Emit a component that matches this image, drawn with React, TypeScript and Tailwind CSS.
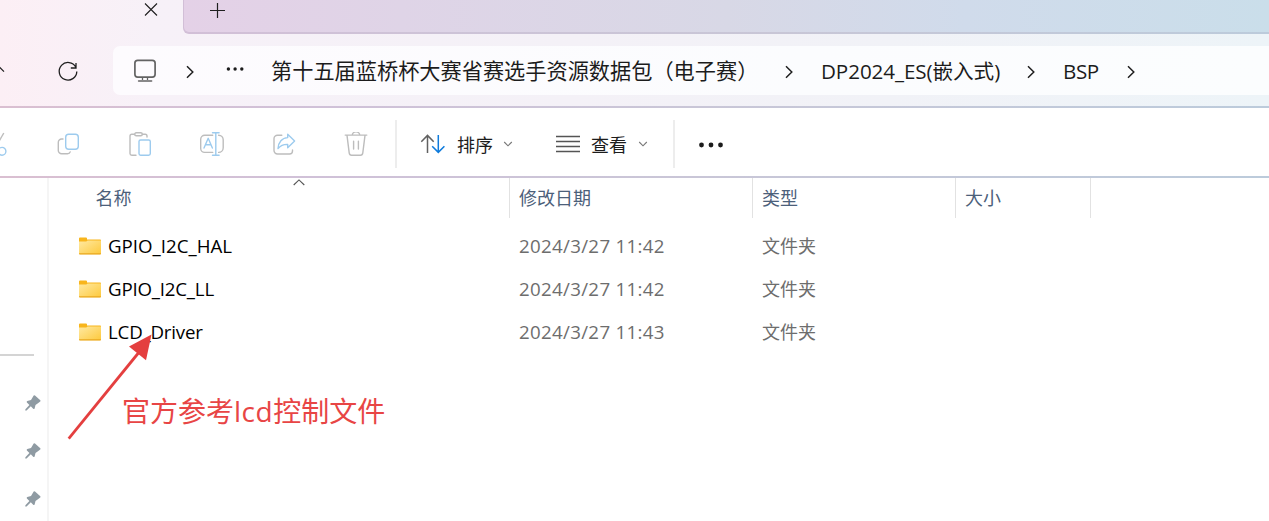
import { ReactNode } from "react";
import { clsx } from "clsx";

const GRAY = "#bdbdbd";
const BLUE = "#9dcbee";

const FILES = [
  { name: "GPIO_I2C_HAL", modified: "2024/3/27 11:42", tracking: "tracking-[0px]" },
  { name: "GPIO_I2C_LL", modified: "2024/3/27 11:42", tracking: "tracking-[-0.2px]" },
  { name: "LCD_Driver", modified: "2024/3/27 11:43", tracking: "tracking-[-0.2px]" },
];

function Icon({ size = 24, className, children }: { size?: number; className?: string; children: ReactNode }) {
  return (
    <svg
      width={size}
      height={size}
      viewBox={`0 0 ${size} ${size}`}
      fill="none"
      strokeWidth={1.4}
      strokeLinecap="round"
      strokeLinejoin="round"
      className={clsx("shrink-0", className)}
      aria-hidden="true"
    >
      {children}
    </svg>
  );
}

function Crumb({ className }: { className?: string }) {
  return (
    <svg width="8" height="14" viewBox="0 0 8 14" fill="none" className={clsx("shrink-0", className)}>
      <path d="M1 1.2l5.8 5.8L1 12.8" stroke="#1f1f1f" strokeWidth="1.5" />
    </svg>
  );
}

function ChevronDown({ className }: { className?: string }) {
  return (
    <svg width="10" height="6" viewBox="0 0 10 6" fill="none" className={clsx("shrink-0", className)}>
      <path d="M1.2 1L5 4.8 8.8 1" stroke="#777" strokeWidth="1.1" />
    </svg>
  );
}

function TabStrip() {
  return (
    <div className="flex h-[34px]">
      <div className="flex w-[183px] shrink-0 pl-[143px]">
        <svg width="16" height="20" viewBox="0 0 16 20" fill="none">
          <path d="M2 3.5l12 12M14 3.5l-12 12" stroke="#1f1f1f" strokeWidth="1.1" />
        </svg>
      </div>
      <div className="flex-1 rounded-bl-[6px] bg-[linear-gradient(90deg,#d2bfd7,#cdc3d7_25%,#c8c6d6_55%,#bccbdb)] pb-[2px] pl-[1px]">
        <div className="h-full rounded-bl-[5px] bg-[linear-gradient(90deg,#e4d1e7,#dfd4e7_20%,#d8d8e6_50%,#d0dbeb_72%,#cadeea)] pl-[25px]">
          <svg width="16" height="20" viewBox="0 0 16 20" fill="none">
            <path d="M1 10.5h15M8.5 3v15" stroke="#1f1f1f" strokeWidth="1.2" />
          </svg>
        </div>
      </div>
    </div>
  );
}

function AddressBar() {
  return (
    <div className="flex h-[72px] items-start pt-[12px]">
      <div className="flex h-[49px] w-[113px] shrink-0 items-center">
        <svg width="8" height="24" viewBox="0 0 8 24" fill="none">
          <path d="M-4 11l3-3.3 5 5" stroke="#1f1f1f" strokeWidth="1.2" />
        </svg>
        <svg width="24" height="24" viewBox="0 0 24 24" fill="none" className="ml-[48px]">
          <path d="M19.8 8.2A8.8 8.8 0 1 0 20.8 12.5M20 4v5h-5.2" stroke="#1f1f1f" strokeWidth="1.3" />
        </svg>
      </div>
      <div className="flex h-[49px] flex-1 items-center rounded-l-[7px] bg-[linear-gradient(90deg,#fdfbfe,#fbfcfe_60%,#fbfdfe)] text-[21.2px] leading-[49px] text-[#1c1c1c]">
        <svg width="24" height="24" viewBox="0 0 24 24" fill="none" className="ml-[20px] shrink-0" stroke="#636363">
          <rect x="1.9" y="1.3" width="20.2" height="16.8" rx="2.8" strokeWidth="1.7" />
          <path d="M9.5 18v3M14.5 18v3" strokeWidth="1.3" />
          <path d="M5.6 22h13" strokeWidth="1.6" strokeLinecap="round" />
        </svg>
        <Crumb className="mt-[3px] ml-[29px]" />
        <svg width="20" height="6" viewBox="0 0 20 6" fill="#1c1c1c" className="mb-[3px] ml-[31px] shrink-0">
          <circle cx="3.4" cy="3" r="1.7" />
          <circle cx="10.1" cy="3" r="1.7" />
          <circle cx="16.8" cy="3" r="1.7" />
        </svg>
        <span className="ml-[26px] w-[514px] shrink-0 whitespace-nowrap">
          第十五届蓝桥杯大赛省赛选手资源数据包（电子赛）
        </span>
        <Crumb className="mt-[3px]" />
        <span className="ml-[28px] w-[206px] shrink-0 whitespace-nowrap pt-px text-[20.6px] tracking-[-0.07px]">
          DP2024_ES(嵌入式)
        </span>
        <Crumb className="mt-[3px]" />
        <span className="ml-[28px] w-[64px] shrink-0 whitespace-nowrap pt-px text-[20.6px] tracking-[-0.4px]">BSP</span>
        <Crumb className="mt-[3px]" />
      </div>
    </div>
  );
}

function Toolbar() {
  return (
    <div className="flex h-[68px] items-center bg-white pt-[3px] text-[18px] text-[#1c1c1c]">
      <svg width="8" height="24" viewBox="0 0 8 24" fill="none" strokeWidth="1.4" className="shrink-0">
        <path d="M3.8 1L-2 11" stroke={GRAY} />
        <circle cx="2" cy="19.3" r="3.9" stroke={BLUE} />
      </svg>
      <div className="ml-[48px] flex shrink-0 gap-[48px]">
        <Icon>
          <path d="M7 7H5.6a3.3 3.3 0 0 0-3.3 3.3v8.2a3.3 3.3 0 0 0 3.3 3.3h6q2 0 2.6-1.9" stroke={GRAY} />
          <rect x="9.7" y="2.2" width="12.6" height="15" rx="3" stroke={BLUE} />
        </Icon>
        <Icon>
          <path d="M6.5 2.2H3.8Q2 2.2 2 4v17.5Q2 23.2 3.8 23.2H8M14.5 2.2h2.7Q19 2.2 19 4v1" stroke={GRAY} />
          <rect x="6.7" y="0.7" width="7.6" height="3" rx="1.5" stroke={GRAY} />
          <rect x="11" y="8" width="11.3" height="15.2" rx="1.6" stroke={BLUE} />
        </Icon>
        <Icon>
          <path d="M12.7 3.2H4.7a4 4 0 0 0-4 4v9.2a4 4 0 0 0 4 4h8M18.6 3.2a4.6 4.6 0 0 1 4.6 4.6v8a4.6 4.6 0 0 1-4.6 4.6" stroke={GRAY} />
          <path d="M15.8.7v22.6M12.5.7h6.6M12.5 23.3h6.6M4 16L8.2 6.3 12.4 16M5.5 12.7h5.4" stroke={BLUE} />
        </Icon>
        <Icon>
          <path d="M9.8 3.3H5.5A3.5 3.5 0 0 0 2 6.8v11.7A3.5 3.5 0 0 0 5.5 22h12q3 0 3-3v-1" stroke={GRAY} />
          <path d="M15.7 2.2L22.6 9l-6.9 6.8v-3.4C11.2 12.2 8.2 14 6 16.6 6.3 10 10.2 5.8 15.7 5.6z" stroke={BLUE} />
        </Icon>
        <Icon>
          <path d="M1.2 3.1h21.6M8.3 3A3.7 3.2 0 0 1 15.7 3M3 3.3l2.2 17.6q.3 2.4 2.3 2.4h9q2 0 2.3-2.4L21 3.3M9.6 9.3v7.8M14.4 9.3v7.8" stroke={GRAY} />
        </Icon>
      </div>
      <div className="ml-[27px] h-[48px] w-[2px] shrink-0 bg-[#ededed]" />
      <svg width="26" height="22" viewBox="0 0 26 22" fill="none" strokeWidth="1.5" className="mt-px ml-[23px] shrink-0">
        <path d="M7.5 20V2.5M1.3 8.7l6.2-6.3 6.2 6.3" stroke="#616161" />
        <path d="M18.3 2v17.4M12.2 13.2l6.1 6.2 6.1-6.2" stroke="#0f7bdc" />
      </svg>
      <span className="ml-[11px] w-[46px] shrink-0 pt-[3px]">排序</span>
      <ChevronDown />
      <svg width="24" height="18" viewBox="0 0 24 18" fill="none" className="mt-px ml-[43px] shrink-0">
        <path d="M0 1.5h24M0 6.5h24M0 11.5h24M0 16.5h24" stroke="#555" strokeWidth="1.3" />
      </svg>
      <span className="ml-[11px] w-[47px] shrink-0 pt-[3px]">查看</span>
      <ChevronDown />
      <div className="ml-[25px] h-[48px] w-[2px] shrink-0 bg-[#ededed]" />
      <svg width="26" height="6" viewBox="0 0 26 6" fill="#1c1c1c" className="mt-[2px] ml-[23px] shrink-0">
        <circle cx="3.5" cy="3" r="2.4" />
        <circle cx="13" cy="3" r="2.4" />
        <circle cx="22.5" cy="3" r="2.4" />
      </svg>
    </div>
  );
}

function Pin() {
  return (
    <svg width="16" height="16" viewBox="0 0 16 16" className="shrink-0">
      <path
        d="M8.7.5Q9.4 0 10 .6L15.3 5.2Q15.9 5.9 15.2 6.5L13.3 8 10.5 10 9.7 13.2Q9 14.6 8.2 13.7L5.8 11.2 1.6 15.4.2 15.6.4 14.3 4.4 9.9 1.9 7.6Q1.2 6.6 2.3 6.1L6 5.1z"
        fill="#8f9ba3"
      />
    </svg>
  );
}

function Sidebar() {
  return (
    <div className="w-[49px] shrink-0 border-r-2 border-[#f5f5f5]">
      <div className="mt-[176px] h-[2px] w-[34px] bg-[#d4d4d4]" />
      <div className="mt-[39px] ml-[25px] flex flex-col gap-[32px]">
        <Pin />
        <Pin />
        <Pin />
      </div>
    </div>
  );
}

function FolderIcon() {
  return (
    <svg width="22" height="18" viewBox="0 0 22 18" className="shrink-0">
      <defs>
        <linearGradient id="folder" x1="0" y1="0" x2="1" y2="1">
          <stop offset="0" stopColor="#ffe9a2" />
          <stop offset="1" stopColor="#fdc93c" />
        </linearGradient>
      </defs>
      <path d="M0 1.5Q0 .5 1 .5H7Q8 .5 8 1.5V2.5H21.2Q22 2.5 22 3.3V16H0z" fill="#f8b51c" />
      <path d="M0 4.4H7.3L8.7 3.4H22V16.5Q22 17.3 21.2 17.3H.8Q0 17.3 0 16.5z" fill="url(#folder)" />
      <path d="M0 16.2h22v.4q0 .9-.8.9H.8Q0 17.5 0 16.6z" fill="#e9a820" />
    </svg>
  );
}

function FileList() {
  return (
    <div className="relative flex-1 text-[18px]">
      <div className="flex h-[40px] leading-[41px] text-[#4c607a]">
        <div className="relative w-[461px] shrink-0 border-r border-[#e2e2e2] pl-[46.5px]">
          名称
          <svg width="12" height="7" viewBox="0 0 12 7" fill="none" className="absolute top-[1px] left-[243.5px]">
            <path d="M.7 6L6 .9 11.3 6" stroke="#555" strokeWidth="1.1" />
          </svg>
        </div>
        <div className="w-[243px] shrink-0 border-r border-[#e2e2e2] pl-[9px]">修改日期</div>
        <div className="w-[203px] shrink-0 border-r border-[#e2e2e2] pl-[9px]">类型</div>
        <div className="w-[135px] shrink-0 border-r border-[#e2e2e2] pl-[9px]">大小</div>
      </div>
      <div className="pt-[6px]">
        {FILES.map((file) => (
          <div key={file.name} className="flex h-[43px] items-center leading-[43px] text-[#6d6d6d]">
            <div className="flex w-[461px] shrink-0 items-center pl-[30px] text-black">
              <FolderIcon />
              <span className={clsx("ml-[7px] text-[18.7px]", file.tracking)}>{file.name}</span>
            </div>
            <div className="w-[243px] shrink-0 pl-[9px] text-[18.7px] tracking-[0.32px]">{file.modified}</div>
            <div className="pt-px pl-[9px]">文件夹</div>
          </div>
        ))}
      </div>
      {/* red markup drawn over the list */}
      <svg width="100" height="120" viewBox="0 0 100 120" className="absolute top-[152px] left-[11px]">
        <path d="M8.7 108.7L80 21" stroke="#e43f3f" strokeWidth="2.8" />
        <path d="M91.5 4.5L69 16.5 86 30.2z" fill="#e43f3f" />
      </svg>
      <div className="absolute top-[213px] left-[73px] whitespace-nowrap text-[28px] leading-[40px] text-[#e84545]">
        官方参考<span className="tracking-[0.5px]">lcd</span>控制文件
      </div>
    </div>
  );
}

export default function App() {
  return (
    <div className="flex h-[521px] w-[1269px] flex-col overflow-hidden bg-white font-['Open_Sans','Noto_Sans_CJK_SC',sans-serif]">
      <header className="shrink-0 bg-[linear-gradient(90deg,#fceff5,#f7f1f8_12%,#f4f1f7_45%,#f1f2f7_70%,#edf4f8)]">
        <TabStrip />
        <AddressBar />
      </header>
      <div className="h-[2px] shrink-0 bg-[linear-gradient(90deg,#dabfd1,#d0c1d8_25%,#c9c6d7_55%,#bccbdb)]" />
      <Toolbar />
      <div className="h-[2px] shrink-0 bg-[linear-gradient(90deg,#dabfd1,#d0c1d8_25%,#c9c6d7_55%,#bccbdb)]" />
      <div className="flex flex-1">
        <Sidebar />
        <FileList />
      </div>
    </div>
  );
}
